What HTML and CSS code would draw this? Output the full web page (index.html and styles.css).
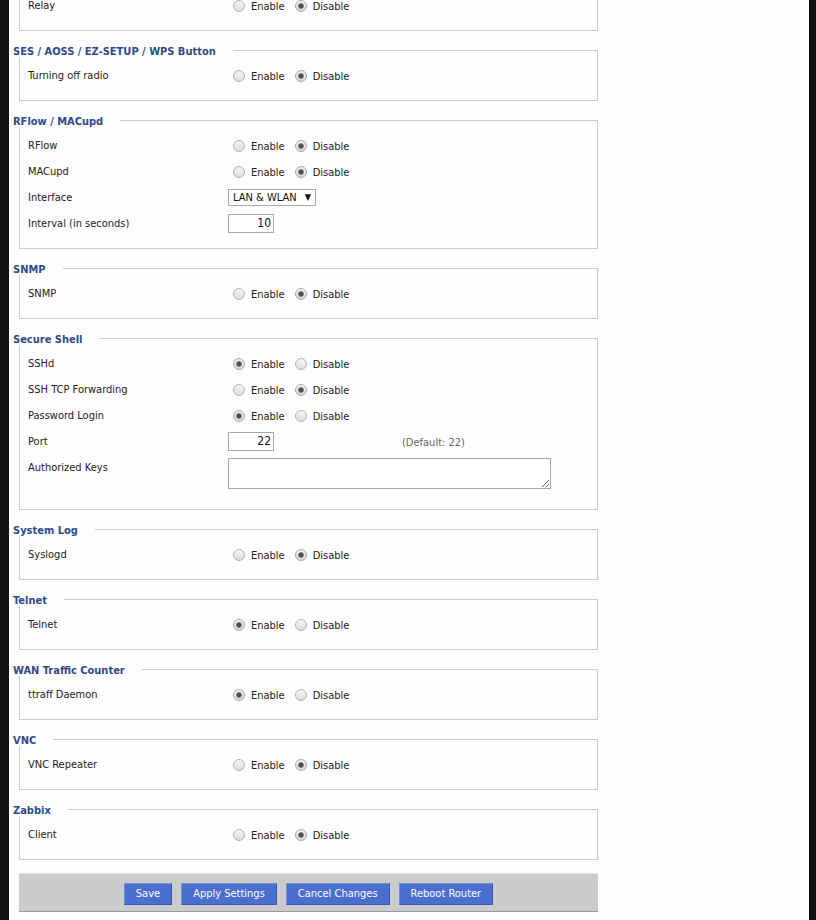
FILE: index.html
```html
<!DOCTYPE html>
<html lang="en">
<head>
<meta charset="utf-8">
<title>Services</title>
<link rel="stylesheet" href="styles.css">
</head>
<body>
<div class="page">
  <div class="content">
    <fieldset>
      <legend>PPPoE Relay</legend>
      <div class="setting">
        <div class="label">Relay</div>
        <label class="opt"><input type="radio" name="relay">Enable</label>
        <label class="opt"><input type="radio" name="relay" checked>Disable</label>
      </div>
    </fieldset>

    <fieldset>
      <legend>SES / AOSS / EZ-SETUP / WPS Button</legend>
      <div class="setting">
        <div class="label">Turning off radio</div>
        <label class="opt"><input type="radio" name="ses">Enable</label>
        <label class="opt"><input type="radio" name="ses" checked>Disable</label>
      </div>
    </fieldset>

    <fieldset>
      <legend>RFlow / MACupd</legend>
      <div class="setting">
        <div class="label">RFlow</div>
        <label class="opt"><input type="radio" name="rflow">Enable</label>
        <label class="opt"><input type="radio" name="rflow" checked>Disable</label>
      </div>
      <div class="setting">
        <div class="label">MACupd</div>
        <label class="opt"><input type="radio" name="macupd">Enable</label>
        <label class="opt"><input type="radio" name="macupd" checked>Disable</label>
      </div>
      <div class="setting">
        <div class="label">Interface</div>
        <span class="select"><select><option>LAN &amp; WLAN</option><option>LAN</option><option>WLAN</option></select></span>
      </div>
      <div class="setting">
        <div class="label">Interval (in seconds)</div>
        <input class="num" type="text" value="10">
      </div>
    </fieldset>

    <fieldset>
      <legend>SNMP</legend>
      <div class="setting">
        <div class="label">SNMP</div>
        <label class="opt"><input type="radio" name="snmp">Enable</label>
        <label class="opt"><input type="radio" name="snmp" checked>Disable</label>
      </div>
    </fieldset>

    <fieldset>
      <legend>Secure Shell</legend>
      <div class="setting">
        <div class="label">SSHd</div>
        <label class="opt"><input type="radio" name="sshd" checked>Enable</label>
        <label class="opt"><input type="radio" name="sshd">Disable</label>
      </div>
      <div class="setting">
        <div class="label">SSH TCP Forwarding</div>
        <label class="opt"><input type="radio" name="sshfwd">Enable</label>
        <label class="opt"><input type="radio" name="sshfwd" checked>Disable</label>
      </div>
      <div class="setting">
        <div class="label">Password Login</div>
        <label class="opt"><input type="radio" name="pwlogin" checked>Enable</label>
        <label class="opt"><input type="radio" name="pwlogin">Disable</label>
      </div>
      <div class="setting">
        <div class="label">Port</div>
        <input class="num" type="text" value="22">
        <span class="default">(Default: 22)</span>
      </div>
      <div class="setting tall">
        <div class="label">Authorized Keys</div>
        <textarea class="keys"></textarea>
      </div>
    </fieldset>

    <fieldset>
      <legend>System Log</legend>
      <div class="setting">
        <div class="label">Syslogd</div>
        <label class="opt"><input type="radio" name="syslog">Enable</label>
        <label class="opt"><input type="radio" name="syslog" checked>Disable</label>
      </div>
    </fieldset>

    <fieldset>
      <legend>Telnet</legend>
      <div class="setting">
        <div class="label">Telnet</div>
        <label class="opt"><input type="radio" name="telnet" checked>Enable</label>
        <label class="opt"><input type="radio" name="telnet">Disable</label>
      </div>
    </fieldset>

    <fieldset>
      <legend>WAN Traffic Counter</legend>
      <div class="setting">
        <div class="label">ttraff Daemon</div>
        <label class="opt"><input type="radio" name="ttraff" checked>Enable</label>
        <label class="opt"><input type="radio" name="ttraff">Disable</label>
      </div>
    </fieldset>

    <fieldset>
      <legend>VNC</legend>
      <div class="setting">
        <div class="label">VNC Repeater</div>
        <label class="opt"><input type="radio" name="vnc">Enable</label>
        <label class="opt"><input type="radio" name="vnc" checked>Disable</label>
      </div>
    </fieldset>

    <fieldset>
      <legend>Zabbix</legend>
      <div class="setting">
        <div class="label">Client</div>
        <label class="opt"><input type="radio" name="zabbix">Enable</label>
        <label class="opt"><input type="radio" name="zabbix" checked>Disable</label>
      </div>
    </fieldset>

    <div class="submitFooter">
      <button type="button" class="btn">Save</button>
      <button type="button" class="btn">Apply Settings</button>
      <button type="button" class="btn">Cancel Changes</button>
      <button type="button" class="btn">Reboot Router</button>
    </div>
  </div>
</div>
</body>
</html>
```

FILE: styles.css
```css
html, body {
  margin: 0;
  padding: 0;
  background: #111111;
  height: 100%;
}

body {
  font-family: "DejaVu Sans Condensed", "Liberation Sans", sans-serif;
  font-size: 11px;
  color: #222222;
  overflow: hidden;
}

.page {
  width: 800px;
  min-height: 100%;
  margin-left: 9px;
  background: #fdfdfd;
  overflow: hidden;
}

/* the page is shown scrolled down a little */
.content {
  margin-top: -27px;
}

fieldset {
  width: 579px;
  box-sizing: border-box;
  min-width: 0;
  margin: 0 0 12px 10px;
  padding: 5px 0 12px 8px;
  border: 1px solid #cccccc;
}

legend {
  margin-left: -15px;
  padding: 3px 17px 0 0;
  line-height: 11px;
  font-weight: bold;
  font-size: 11px;
  color: #2e4a8b;
}

.setting {
  display: flex;
  align-items: center;
  height: 26px;
}

.setting.tall {
  height: auto;
  align-items: flex-start;
  padding: 4px 0 8px;
}

.label {
  width: 200px;
  flex: none;
  line-height: 13px;
}

.setting.tall .label {
  padding-top: 3px;
}

.opt {
  display: flex;
  align-items: center;
  margin-top: 3px;
  margin-right: 5px;
  color: #222222;
}

.opt input[type="radio"] {
  -webkit-appearance: none;
  appearance: none;
  width: 12px;
  height: 12px;
  box-sizing: border-box;
  margin: -2px 6px 0 5px;
  border: 1px solid #b3b3b3;
  border-radius: 50%;
  background: linear-gradient(#f6f6f6, #dcdcdc);
}

.opt input[type="radio"]:checked {
  border-color: #a8a8a8;
  background:
    radial-gradient(circle, #4c4c4c 0, #4c4c4c 1.6px, #8a8a8a 2.6px, rgba(0,0,0,0) 3.4px),
    linear-gradient(#f3f3f3, #d8d8d8);
}

.select {
  position: relative;
  display: inline-block;
}

.select select {
  -webkit-appearance: none;
  appearance: none;
  width: 88px;
  height: 17px;
  box-sizing: border-box;
  margin: 0;
  padding: 0 0 0 4px;
  border: 1px solid #a9a9a9;
  border-radius: 0;
  background: #ffffff;
  font-family: "DejaVu Sans Condensed", "Liberation Sans", sans-serif;
  font-size: 11px;
  line-height: 15px;
  color: #111111;
}

.select::after {
  content: "\25BC";
  position: absolute;
  right: 5px;
  top: 2px;
  font-size: 9px;
  line-height: 13px;
  color: #111111;
  pointer-events: none;
}

.num {
  width: 46px;
  height: 19px;
  box-sizing: border-box;
  margin: 0;
  padding: 0 2px;
  border: 1px solid #a9a9a9;
  background: #ffffff;
  text-align: right;
  font-family: "DejaVu Sans Condensed", "Liberation Sans", sans-serif;
  font-size: 12px;
  color: #111111;
}

.default {
  margin-left: 128px;
  margin-top: 2px;
  color: #666666;
}

.keys {
  width: 323px;
  height: 31px;
  box-sizing: border-box;
  margin: 0;
  border: 1px solid #a9a9a9;
  background: #ffffff;
}

.submitFooter {
  width: 579px;
  height: 39px;
  box-sizing: border-box;
  margin: 13px 0 0 10px;
  padding-top: 9px;
  background: #cccbcc;
  border-top: 1px solid #e2e2e2;
  border-bottom: 1px solid #9a9a9a;
  display: flex;
  justify-content: center;
  align-items: flex-start;
  gap: 9px;
}

.btn {
  height: 22px;
  box-sizing: border-box;
  margin: 0;
  padding: 0 11px;
  background: #4a6fcf;
  border: 1px solid;
  border-color: #7090dc #3657b6 #3657b6 #7090dc;
  color: #ffffff;
  font-family: "DejaVu Sans Condensed", "Liberation Sans", sans-serif;
  font-size: 11px;
  line-height: 20px;
  cursor: pointer;
}
```
